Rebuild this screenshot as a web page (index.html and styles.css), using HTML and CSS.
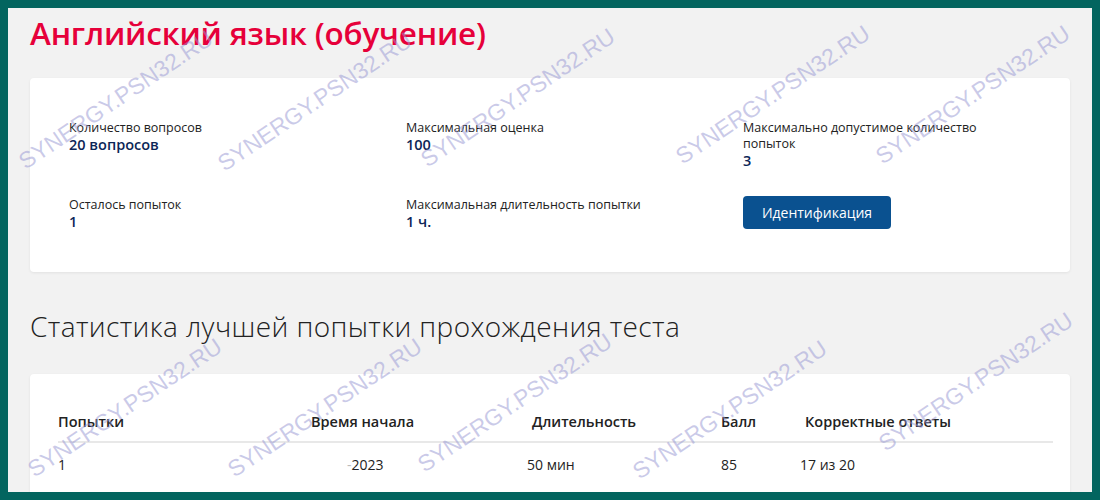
FILE: index.html
```html
<!DOCTYPE html>
<html lang="ru">
<head>
    <meta charset="UTF-8">
    <meta name="viewport" content="width=device-width, initial-scale=1.0">
    <title>Английский язык (обучение)</title>
    <link rel="stylesheet" href="styles.css">
</head>
<body>
    <div class="frame">
        <h1 class="title">Английский язык (обучение)</h1>

        <div class="card info">
            <div class="item">
                <div class="label">Количество вопросов</div>
                <div class="value">20 вопросов</div>
            </div>
            <div class="item">
                <div class="label">Максимальная оценка</div>
                <div class="value">100</div>
            </div>
            <div class="item">
                <div class="label">Максимально допустимое количество<br>попыток</div>
                <div class="value">3</div>
            </div>
            <div class="item">
                <div class="label">Осталось попыток</div>
                <div class="value">1</div>
            </div>
            <div class="item">
                <div class="label">Максимальная длительность попытки</div>
                <div class="value">1 ч.</div>
            </div>
            <div class="item">
                <button class="btn">Идентификация</button>
            </div>
        </div>

        <h2 class="subtitle">Статистика лучшей попытки прохождения теста</h2>

        <div class="card stats">
            <div class="row head">
                <div>Попытки</div>
                <div>Время начала</div>
                <div>Длительность</div>
                <div>Балл</div>
                <div>Корректные ответы</div>
            </div>
            <div class="row">
                <div>1</div>
                <div class="date"><span class="dash">-</span>2023</div>
                <div class="shift">50 мин</div>
                <div>85</div>
                <div class="shift">17 из 20</div>
            </div>
        </div>

        <!-- watermarks -->
        <span class="mark" style="left: 108px; top: 92px;">SYNERGY.PSN32.RU</span>
        <span class="mark" style="left: 307px; top: 94px;">SYNERGY.PSN32.RU</span>
        <span class="mark" style="left: 510px; top: 90px;">SYNERGY.PSN32.RU</span>
        <span class="mark" style="left: 765px; top: 87px;">SYNERGY.PSN32.RU</span>
        <span class="mark" style="left: 965px; top: 87px;">SYNERGY.PSN32.RU</span>
        <span class="mark" style="left: 117px; top: 400px;">SYNERGY.PSN32.RU</span>
        <span class="mark" style="left: 317px; top: 400px;">SYNERGY.PSN32.RU</span>
        <span class="mark" style="left: 507px; top: 395px;">SYNERGY.PSN32.RU</span>
        <span class="mark" style="left: 722px; top: 402px;">SYNERGY.PSN32.RU</span>
        <span class="mark" style="left: 968px; top: 374px;">SYNERGY.PSN32.RU</span>
    </div>
</body>
</html>
```

FILE: styles.css
```css
body {
    margin: 0;
    font-family: "Open Sans", "Noto Sans", sans-serif;
    color: #222;
}

.frame {
    position: relative;
    height: 500px;
    box-sizing: border-box;
    border: 8px solid #03655f;
    background-color: #f2f2f2;
    padding: 0 22px;
    overflow: hidden;
}

.title {
    margin: 3px 0 23px;
    font-size: 31.5px;
    line-height: 44px;
    font-weight: 600;
    color: #e6003a;
    letter-spacing: -0.2px;
}

.card {
    background-color: white;
    border-radius: 4px;
    box-shadow: 0 1px 3px rgba(0, 0, 0, 0.07);
}

.info {
    display: grid;
    grid-template-columns: 337px 337px 1fr;
    row-gap: 27px;
    padding: 42px 39px 41px;
}

.label {
    font-size: 12.5px;
    line-height: 16px;
    color: #222;
}

.value {
    font-size: 14.5px;
    line-height: 18px;
    font-weight: 600;
    color: #0c2657;
}

.btn {
    background-color: #0a5190;
    color: white;
    font-family: "Open Sans", "Noto Sans", sans-serif;
    font-size: 14px;
    border: none;
    border-radius: 4px;
    height: 33px;
    width: 148px;
    margin-top: -1px;
    cursor: pointer;
}

.subtitle {
    margin: 36px 0 30px;
    font-size: 28px;
    line-height: 36px;
    font-weight: 300;
    letter-spacing: 0.4px;
    color: #222;
}

.stats {
    padding: 30px 17px 20px 28px;
}

.row {
    display: grid;
    grid-template-columns: 253px 221px 189px 84px 1fr;
    font-size: 14px;
    line-height: 20px;
}

.row.head {
    font-size: 14.5px;
    font-weight: 600;
    padding: 8px 0 9px;
    border-bottom: 2px solid #e8e8e8;
}

.row + .row {
    padding-top: 12px;
}

.date {
    padding-left: 36px;
}

.dash {
    color: #bbb;
}

.shift {
    margin-left: -5px;
}

.mark {
    position: absolute;
    transform: translate(-50%, -50%) rotate(-34deg);
    font-family: "Liberation Sans", sans-serif;
    font-size: 23px;
    color: rgba(150, 150, 210, 0.5);
    white-space: nowrap;
    pointer-events: none;
}
```
